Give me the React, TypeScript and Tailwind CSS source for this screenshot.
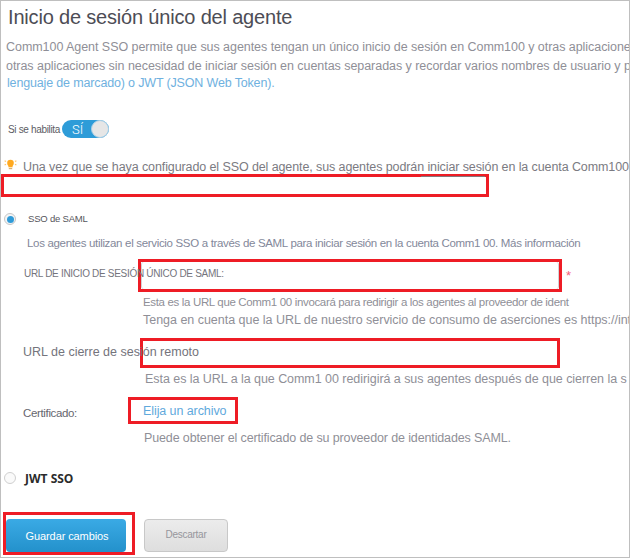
import type { ReactNode } from "react";

function Radio({ checked = false }: { checked?: boolean }) {
  return (
    <span
      className={
        checked
          ? "flex size-[12px] shrink-0 items-center justify-center rounded-full border border-[#c6c6c6] bg-[#f3f5f7]"
          : "flex size-[12px] shrink-0 items-center justify-center rounded-full border border-[#cfcfcf] bg-[#fafafa]"
      }
    >
      {checked && <span className="size-[7px] rounded-full bg-[#2f9bd8]" />}
    </span>
  );
}

function Bulb() {
  return (
    <svg width="13" height="12" viewBox="0 0 13 12" className="shrink-0">
      <circle cx="6.5" cy="4" r="3.3" fill="#ffa91f" />
      <path d="M4.4 5.5h4.2v2.8H4.4z" fill="#ffa91f" />
      <path d="M4.8 9h3.4v1.2H4.8z" fill="#d8b070" />
      <path d="M.6 1.8l1.4.8M.6 6l1.4-.8M12.4 1.8l-1.4.8M12.4 6l-1.4-.8" stroke="#ffc56b" strokeWidth="1.2" />
    </svg>
  );
}

function Help({ className, children }: { className: string; children: ReactNode }) {
  return <p className={`h-[16px] leading-[16px] text-[#8f8f97] ${className}`}>{children}</p>;
}

export default function App() {
  return (
    <main className="flex h-[558px] w-[630px] flex-col overflow-hidden whitespace-nowrap border border-[#bfbfbf] bg-white font-['Liberation_Sans',Arial,sans-serif] text-[12.5px]">
      <h1 className="mt-1 ml-[7px] h-[24px] text-[20px] leading-[24px] tracking-[-0.18px] text-[#4d4d55]">
        Inicio de sesión único del agente
      </h1>
      <div className="mt-[10px] ml-[5px] leading-[17px] text-[#8f8f97]">
        <p className="tracking-[-0.052px]">
          Comm100 Agent SSO permite que sus agentes tengan un único inicio de sesión en Comm100 y otras aplicacione
        </p>
        <p className="mt-[2px] tracking-[-0.048px]">
          otras aplicaciones sin necesidad de iniciar sesión en cuentas separadas y recordar varios nombres de usuario y p
        </p>
        <p className="ml-px tracking-[-0.157px] text-[#6fb1e0]">lenguaje de marcado) o JWT (JSON Web Token).</p>
      </div>

      <div className="mt-[28px] ml-[7px] flex h-[18px] items-center">
        <span className="w-[54px] pt-px text-[10px] leading-[18px] tracking-[-0.336px] text-[#5c5c64]">Si se habilita</span>
        <span className="flex h-[18px] w-[47px] items-center justify-between rounded-full bg-[#2e9cd8] pl-[10px]">
          <span className="pt-px font-[Roboto,sans-serif] text-[13px] font-light leading-[18px] text-white">SÍ</span>
          <span className="size-[18px] rounded-full border border-[#a9cfe6] bg-[#e6e6e6]" />
        </span>
      </div>

      <div className="mt-[21px] ml-[3px] flex h-[15px] items-start">
        <Bulb />
        <p className="ml-[6px] leading-[16px] tracking-[-0.1px] text-[#7b7b82]">
          Una vez que se haya configurado el SSO del agente, sus agentes podrán iniciar sesión en la cuenta Comm100
        </p>
      </div>
      <div className="h-[23px] w-[488px] shrink-0 border-3 border-[#ee1c25]">
        <div className="-mt-px ml-auto mr-px h-px w-[64px] bg-[#85787c]" />
      </div>

      <div className="mt-[15px] ml-[3px] flex h-[14px] items-center">
        <Radio checked />
        <span className="ml-[12px] text-[9.5px] leading-[14px] tracking-[-0.2px] text-[#55555c]">SSO de SAML</span>
      </div>
      <p className="mt-[9px] ml-[26px] h-[16px] text-[11.5px] leading-[16px] tracking-[-0.323px] text-[#83889a]">
        Los agentes utilizan el servicio SSO a través de SAML para iniciar sesión en la cuenta Comm1 00. Más información
      </p>

      <div className="mt-2 flex h-[33px] shrink-0 items-center">
        <label className="z-10 ml-[23px] w-[114px] pb-[3px] text-[10px] leading-[14px] tracking-[-0.308px] text-[#74747c]">
          URL DE INICIO DE SESIÓN ÚNICO DE SAML:
        </label>
        <div className="h-[33px] w-[424px] border-3 border-[#ee1c25]">
          <div className="h-full rounded-[3px] border-x border-[#d2d2d6]" />
        </div>
        <span className="ml-1 text-[13px] leading-[14px] text-[#f4607a]">*</span>
      </div>
      <Help className="mt-[2px] ml-[142px] text-[11.5px] tracking-[-0.342px]">
        Esta es la URL que Comm1 00 invocará para redirigir a los agentes al proveedor de ident
      </Help>
      <Help className="mt-[2px] ml-[142px] tracking-[-0.024px]">
        Tenga en cuenta que la URL de nuestro servicio de consumo de aserciones es https://int
      </Help>

      <div className="mt-[10px] flex h-[30px] shrink-0 items-center">
        <label className="z-10 ml-[22px] w-[117px] pb-[2px] leading-[16px] text-[#74747c]">
          URL de cierre de sesión remoto
        </label>
        <div className="h-[30px] w-[420px] border-3 border-[#ee1c25]" />
      </div>
      <Help className="mt-[3px] ml-[144px] tracking-[-0.05px]">
        Esta es la URL a la que Comm1 00 redirigirá a sus agentes después de que cierren la s
      </Help>

      <div className="mt-[10px] flex h-[27px] shrink-0 items-center">
        <label className="ml-[22px] w-[105px] pt-[5px] text-[11.5px] leading-[16px] tracking-[-0.35px] text-[#66666e]">
          Certificado:
        </label>
        <a className="flex h-[27px] w-[110px] items-center border-3 border-[#ee1c25] pt-[2px] pl-[12px] tracking-[-0.08px] text-[#5fa9dc]">
          Elija un archivo
        </a>
      </div>
      <Help className="mt-[6px] ml-[143px] tracking-[-0.128px]">
        Puede obtener el certificado de su proveedor de identidades SAML.
      </Help>

      <div className="mt-[25px] ml-[3px] flex h-[14px] items-center">
        <Radio />
        <span className="ml-[9px] pt-px font-['Open_Sans',sans-serif] text-[12px] font-bold leading-[14px] text-[#2b2b2b]">
          JWT SSO
        </span>
      </div>

      <div className="mt-[27px] ml-[2px] flex h-[43px] shrink-0 items-start">
        <div className="h-[43px] w-[132px] border-3 border-[#ee1c25] pt-1">
          <button className="block h-[33px] w-[120px] rounded-[4px] bg-linear-to-b from-[#3aaae5] to-[#2391cb] pt-[2px] pl-[2px] text-[11px] tracking-[-0.1px] text-white">
            Guardar cambios
          </button>
        </div>
        <button className="mt-[7px] ml-[9px] h-[33px] w-[84px] rounded-[4px] border border-[#c8c8c8] bg-linear-to-b from-[#ececec] to-[#dedede] pb-[2px] text-[10px] tracking-[-0.26px] text-[#96969c]">
          Descartar
        </button>
      </div>
    </main>
  );
}
